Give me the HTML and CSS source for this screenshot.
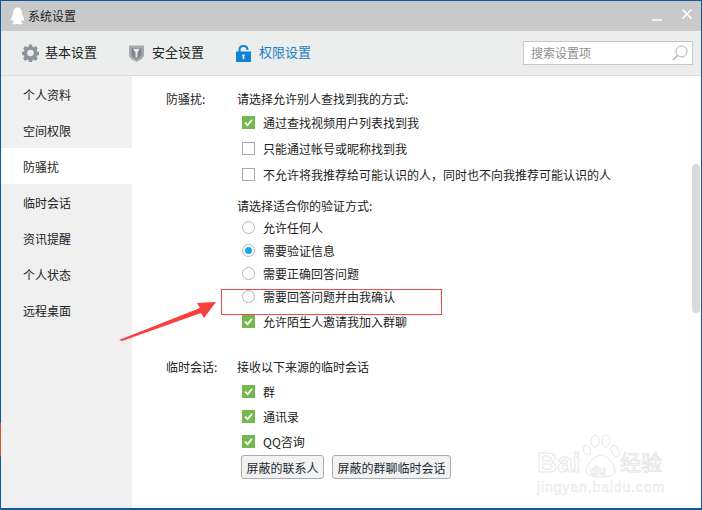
FILE: index.html
```html
<!DOCTYPE html>
<html lang="zh">
<head>
<meta charset="utf-8">
<title>系统设置</title>
<link rel="stylesheet" href="styles.css">
</head>
<body>
<div class="window">
  <header class="titlebar">
    <svg class="logo" width="15" height="18" viewBox="0 0 18 22"><path fill="#fff" d="M9 .5C5.200 .5 3.600 3.500 3.600 7.500C3.600 9 2.800 10 2 11.500C1 13.500.6 15.500 1.200 16.800C1.700 17.200 2.500 16 3 15.200C3.400 16.500 4 17.500 4.800 18.200C3.600 18.800 3 19.300 3.200 20.500C3.600 21.800 6.500 21.500 9 20.500C11.500 21.500 14.400 21.800 14.800 20.500C15 19.300 14.400 18.800 13.200 18.200C14 17.500 14.600 16.500 15 15.200C15.500 16 16.300 17.200 16.800 16.800C17.400 15.500 17 13.500 16 11.500C15.200 10 14.400 9 14.400 7.500C14.400 3.500 12.800 .5 9 .5Z"/></svg>
    <span class="title-text">系统设置</span>
    <span class="spacer"></span>
    <svg class="winbtn" width="12" height="12" viewBox="0 0 12 12"><path d="M1 10H11" stroke="#fff" stroke-width="1.500"/></svg>
    <svg class="winbtn winbtn-close" width="12" height="12" viewBox="0 0 12 12"><path d="M1.500 1.500L10.500 10.500M10.500 1.500L1.500 10.500" stroke="#fff" stroke-width="1.500"/></svg>
  </header>
  <nav class="toolbar">
    <div class="tab tab-basic">
      <svg width="17" height="18" viewBox="0 0 18 18"><path fill="#8d9499" fill-rule="evenodd" d="M7.300 0h3.400l.4 2.400 1.300.6 2-1.400 2.400 2.500-1.300 2 .5 1.300 2 .4v3.400l-2 .4-.5 1.300 1.300 2-2.400 2.500-2-1.400-1.300.6-.4 2.400H7.300l-.4-2.400-1.300-.6-2 1.400-2.400-2.500 1.300-2-.5-1.300-2-.4V7.800l2-.4.500-1.300-1.300-2 2.400-2.500 2 1.400 1.300-.6zM9 5.500a3.500 3.500 0 1 0 0 7 3.500 3.500 0 0 0 0-7z"/></svg>
      <span class="tab-text">基本设置</span>
    </div>
    <div class="tab tab-safe">
      <svg width="15" height="17" viewBox="0 0 15 17"><path fill="#a4aaae" d="M0 .5H15V10C15 13 11 15 7.500 17C4 15 0 13 0 10Z"/><path fill="#7f868b" d="M2.500 3H12.500V9.500C12.500 11.500 9.500 13 7.500 14.200C5.500 13 2.500 11.500 2.500 9.500Z"/><path fill="#e4e6e7" d="M4 3.800H11L8.500 7.500V12.500H6.500V7.500Z"/></svg>
      <span class="tab-text">安全设置</span>
    </div>
    <div class="tab tab-active">
      <svg width="15" height="17" viewBox="0 0 15 17"><path fill="none" stroke="#0e83d6" stroke-width="2" d="M3.500 7.500V5C3.500 2.500 5.300 1 7.500 1C9.700 1 11.500 2.500 11.500 5"/><path fill="#0e83d6" fill-rule="evenodd" d="M0 6.500H15V17H0ZM7.500 9.300a1.400 1.400 0 0 0-.8 2.500V14.300H8.300V11.800A1.400 1.400 0 0 0 7.500 9.300Z"/></svg>
      <span class="tab-text">权限设置</span>
    </div>
    <span class="spacer"></span>
    <div class="search">
      <span class="search-text">搜索设置项</span>
      <svg width="16" height="16" viewBox="0 0 16 16"><circle cx="9.500" cy="6.500" r="5.500" fill="none" stroke="#a9a9a9"/><path d="M5.500 10.500L1 15" stroke="#a9a9a9" stroke-width="1.200"/></svg>
    </div>
  </nav>
  <div class="body">
    <aside class="sidebar">
      <div class="side-item">个人资料</div>
      <div class="side-item">空间权限</div>
      <div class="side-item side-active">防骚扰</div>
      <div class="side-item">临时会话</div>
      <div class="side-item">资讯提醒</div>
      <div class="side-item">个人状态</div>
      <div class="side-item">远程桌面</div>
    </aside>
    <main class="content">
      <section class="section">
        <div class="label">防骚扰:</div>
        <div class="fields">
          <div class="heading">请选择允许别人查找到我的方式:</div>
          <div class="row row-check"><span class="box on"><svg width="13" height="13" viewBox="0 0 14 14"><path d="M2.500 7.200L5.800 10.300L11.500 3.500" fill="none" stroke="#fff" stroke-width="2.400"/></svg></span>通过查找视频用户列表找到我</div>
          <div class="row row-check"><span class="box"></span>只能通过帐号或昵称找到我</div>
          <div class="row row-check"><span class="box"></span>不允许将我推荐给可能认识的人，同时也不向我推荐可能认识的人</div>
          <div class="heading heading-gap">请选择适合你的验证方式:</div>
          <div class="row row-radio"><span class="radio"></span>允许任何人</div>
          <div class="row row-radio"><span class="radio selected"></span>需要验证信息</div>
          <div class="row row-radio"><span class="radio"></span>需要正确回答问题</div>
          <div class="row row-radio"><span class="radio"></span>需要回答问题并由我确认</div>
          <div class="row row-check"><span class="box on"><svg width="13" height="13" viewBox="0 0 14 14"><path d="M2.500 7.200L5.800 10.300L11.500 3.500" fill="none" stroke="#fff" stroke-width="2.400"/></svg></span>允许陌生人邀请我加入群聊</div>
        </div>
      </section>
      <section class="section section-two">
        <div class="label">临时会话:</div>
        <div class="fields">
          <div class="heading heading-full">接收以下来源的临时会话</div>
          <div class="row row-tight"><span class="box on"><svg width="13" height="13" viewBox="0 0 14 14"><path d="M2.500 7.200L5.800 10.300L11.500 3.500" fill="none" stroke="#fff" stroke-width="2.400"/></svg></span>群</div>
          <div class="row row-tight"><span class="box on"><svg width="13" height="13" viewBox="0 0 14 14"><path d="M2.500 7.200L5.800 10.300L11.500 3.500" fill="none" stroke="#fff" stroke-width="2.400"/></svg></span>通讯录</div>
          <div class="row row-tight"><span class="box on"><svg width="13" height="13" viewBox="0 0 14 14"><path d="M2.500 7.200L5.800 10.300L11.500 3.500" fill="none" stroke="#fff" stroke-width="2.400"/></svg></span>QQ咨询</div>
          <div class="buttons">
            <button class="btn btn-a">屏蔽的联系人</button>
            <button class="btn btn-b">屏蔽的群聊临时会话</button>
          </div>
        </div>
      </section>
      <div class="scrollbar"></div>
      <div class="highlight"></div>
      <svg class="arrow" width="100" height="42" viewBox="0 0 100 42"><path fill="#f9403f" d="M1 40L82 8L79 3L98 2L86 18L83 13L4 41Z"/></svg>
      <div class="watermark">
        <svg class="paw" width="38" height="44" viewBox="0 0 38 44"><g fill="#fff" stroke="#e6e6e6"><ellipse cx="5" cy="16" rx="3.500" ry="5" transform="rotate(-20 5 16)"/><ellipse cx="13" cy="7" rx="4" ry="6"/><ellipse cx="24" cy="7" rx="4" ry="6"/><ellipse cx="33" cy="17" rx="3.500" ry="6" transform="rotate(-25 33 17)"/><path d="M19 21C24 21 33 30 33 36C33 42 26 43 19 43C11 43 4 42 4 36C4 30 14 21 19 21Z"/></g></svg>
        <span class="wm-bai">Bai</span>
        <span class="wm-du">du</span>
        <span class="wm-jy">经验</span>
        <span class="wm-url">jingyan.baidu.com</span>
      </div>
    </main>
  </div>
  <div class="desktop-strip"></div>
</div>
</body>
</html>
```
FILE: styles.css
```css
* { box-sizing: border-box; }
html, body { margin: 0; padding: 0; }
body {
  width: 702px;
  height: 510px;
  overflow: hidden;
  font-family: "Noto Sans CJK SC", "Liberation Sans", sans-serif;
  font-size: 12px;
  color: #222;
}
.window {
  position: relative;
  width: 702px;
  height: 510px;
  border: 1px solid #0f5a9c;
  border-width: 1px 1px 2px 1px;
  display: flex;
  flex-direction: column;
  background: #fff;
}
.titlebar {
  height: 30px;
  flex: none;
  background: #c9c9c9;
  display: flex;
  align-items: center;
  padding-left: 9px;
}
.logo { margin-right: 3px; }
.title-text { color: #222; padding-bottom: 2px; }
.spacer { flex: 1; }
.winbtn { margin-right: 18px; }
.winbtn-close { margin-right: 8px; margin-top: -4px; }
.toolbar {
  height: 45px;
  flex: none;
  background: #eceeee;
  border-bottom: 1px solid #dcdcdc;
  display: flex;
  align-items: center;
  font-size: 13px;
}
.tab { display: flex; align-items: center; gap: 6px; }
.tab-text { padding-bottom: 3px; }
.tab-basic { margin-left: 21px; }
.tab-safe { margin-left: 32px; gap: 8px; }
.tab-active { margin-left: 32px; gap: 8px; color: #1a7dc4; }
.search {
  width: 170px;
  height: 24px;
  margin-right: 8px;
  background: #fff;
  border: 1px solid #c8c8c8;
  display: flex;
  align-items: center;
  justify-content: space-between;
  padding: 0 4px 0 7px;
  color: #8e8e8e;
}
.search-text { font-size: 12px; padding-bottom: 2px; }
.body { flex: 1; display: flex; min-height: 0; }
.sidebar {
  width: 131px;
  flex: none;
  background: #f0f0f0;
}
.side-item {
  height: 36px;
  line-height: 37px;
  padding-left: 22px;
}
.side-active { background: #fff; }
.content {
  flex: 1;
  position: relative;
  padding: 11px 0 0 34px;
}
.section { display: flex; }
.section-two { margin-top: 21px; }
.label { width: 71px; height: 24px; line-height: 24px; flex: none; }
.fields { flex: 1; }
.heading { height: 22px; line-height: 24px; }
.heading-gap { margin-top: 7px; }
.heading-full { height: 24px; }
.row { display: flex; align-items: center; }
.row-check { height: 26px; }
.row-radio { height: 23px; }
.row-tight { height: 25px; }
.box {
  width: 13px;
  height: 13px;
  margin: 0 8px 0 5px;
  background: #fff;
  border: 1px solid #a9a9a9;
  flex: none;
  display: flex;
  align-items: center;
  justify-content: center;
}
.box.on { background: #74b94e; border-color: #74b94e; }
.radio {
  width: 13px;
  height: 13px;
  margin: 0 8px 0 5px;
  border: 1px solid #b4b4b4;
  border-radius: 50%;
  background: #fff;
  flex: none;
  display: flex;
  align-items: center;
  justify-content: center;
}
.radio.selected::after {
  content: "";
  width: 7px;
  height: 7px;
  border-radius: 50%;
  background: #12a8f0;
}
.buttons { display: flex; gap: 8px; margin: 1px 0 0 4px; }
.btn {
  height: 24px;
  padding: 0;
  background: #f2f2f2;
  border: 1px solid #a8adb0;
  border-radius: 3px;
  font: inherit;
  color: #1d2a33;
}
.btn-a { width: 83px; }
.btn-b { width: 119px; }
.scrollbar {
  position: absolute;
  top: 88px;
  right: 1px;
  width: 8px;
  height: 149px;
  border-radius: 4px;
  background: #d9d9d9;
}
.highlight {
  position: absolute;
  left: 89px;
  top: 213px;
  width: 221px;
  height: 26px;
  border: 1px solid #ee4a4a;
}
.arrow { position: absolute; left: -14px; top: 224px; }
.watermark {
  position: absolute;
  left: 405px;
  top: 356px;
  width: 130px;
  height: 76px;
  font-family: "Liberation Sans", sans-serif;
  color: #fff;
  -webkit-text-stroke: 1px #e8e8e8;
}
.paw { position: absolute; left: 45px; top: 2px; }
.wm-bai { position: absolute; left: 0; top: 15px; font-size: 28px; font-weight: 700; }
.wm-du { position: absolute; left: 53px; top: 31px; font-size: 13px; font-weight: 700; -webkit-text-stroke: .6px #e0e0e0; }
.wm-jy { position: absolute; left: 83px; top: 14px; font-size: 21px; font-family: "Noto Sans CJK SC", sans-serif; }
.wm-url { position: absolute; left: 0; top: 47px; font-size: 14px; letter-spacing: .9px; -webkit-text-stroke: .6px #e8e8e8; }
.desktop-strip {
  position: absolute;
  left: -1px;
  top: 422px;
  width: 1px;
  height: 33px;
  background: #d9562d;
}
```
